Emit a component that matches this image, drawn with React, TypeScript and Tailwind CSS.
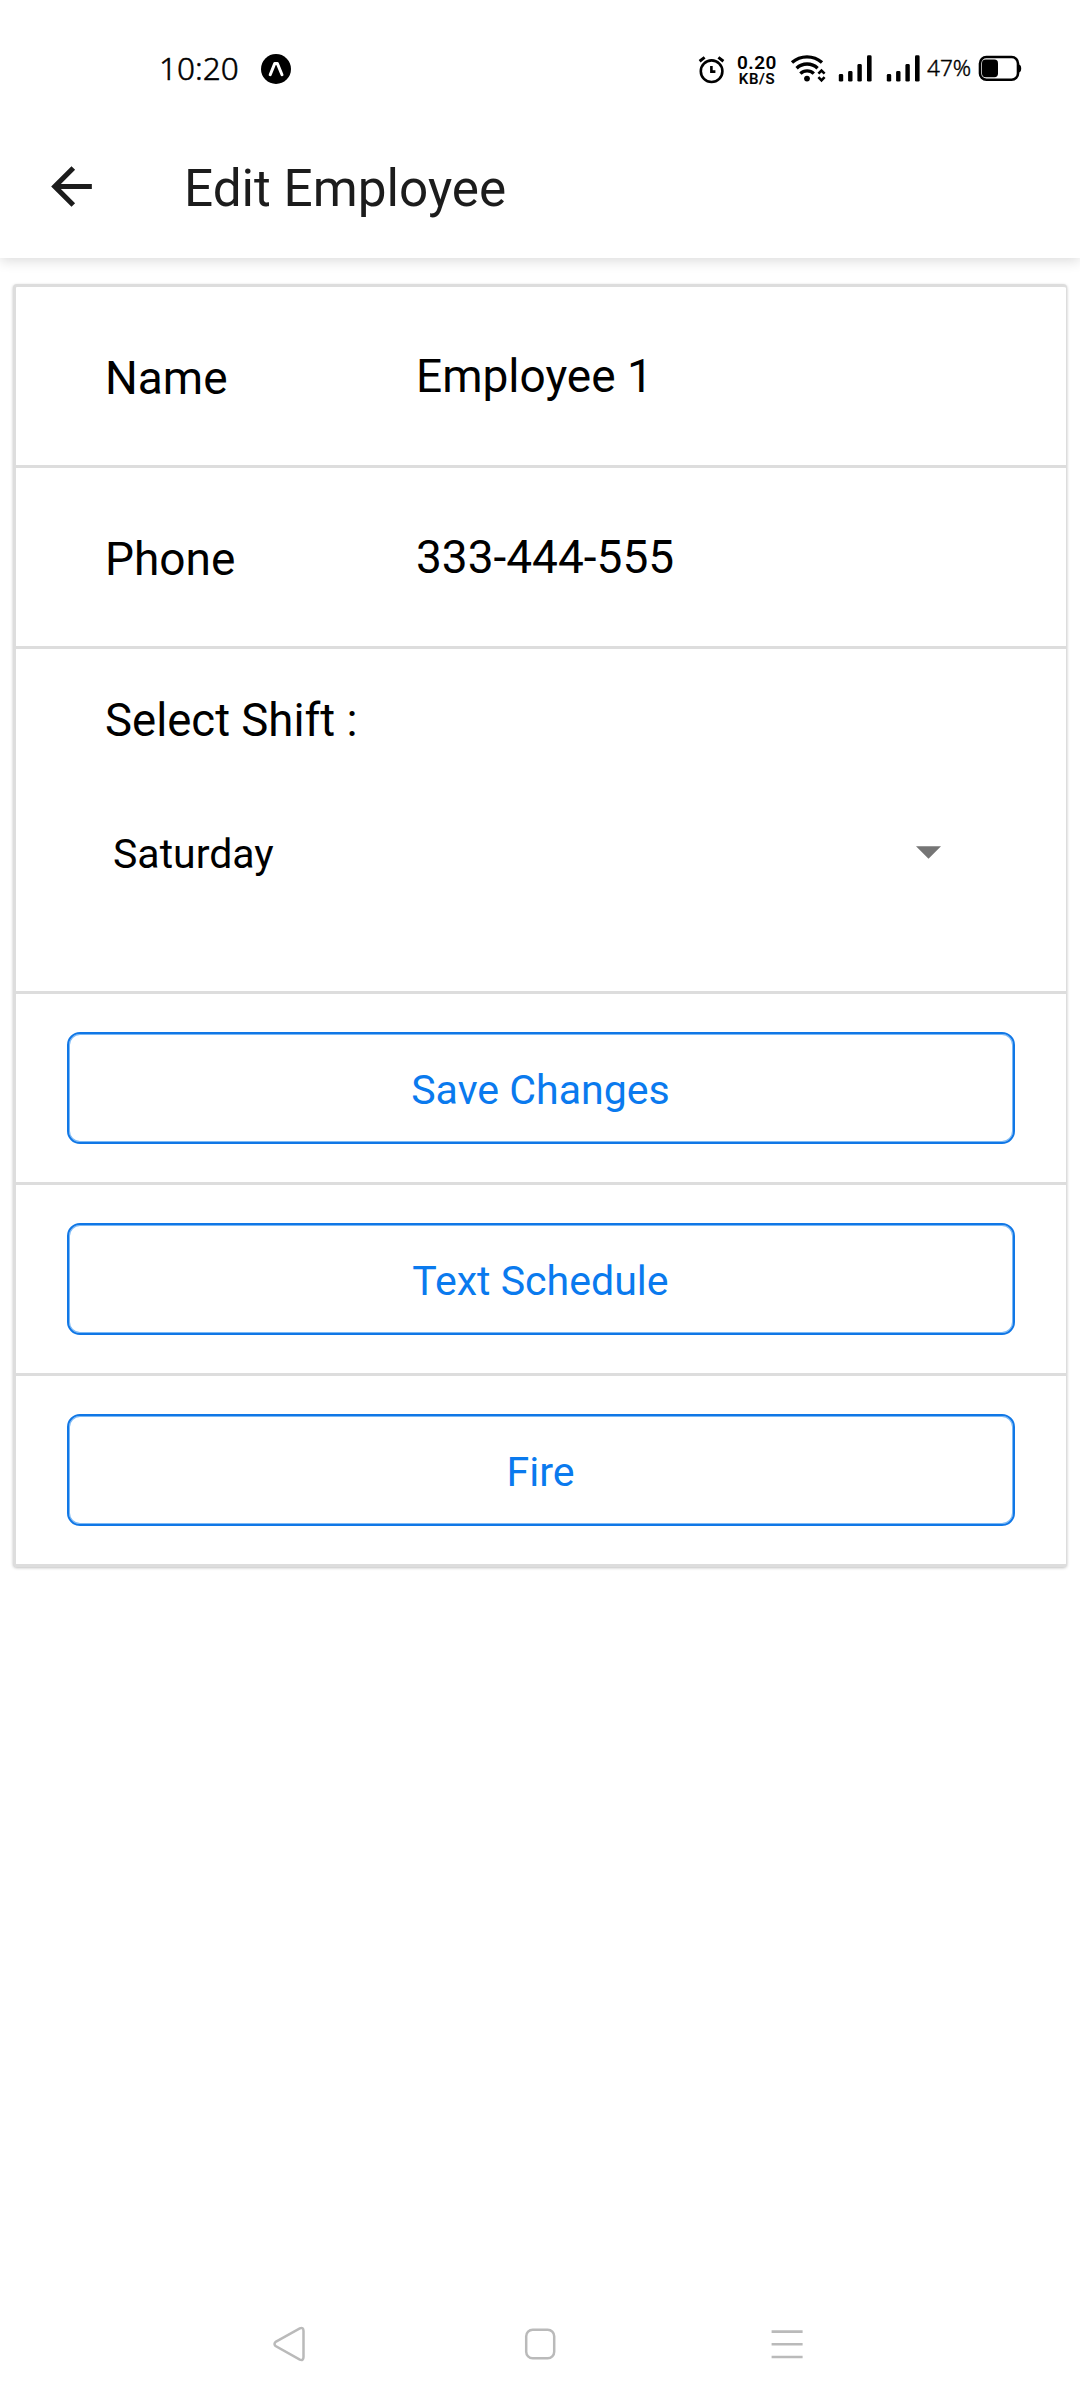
import type { ReactNode } from "react";

function StatusBar() {
  return (
    <div className="flex h-[118px] items-start pt-[49px] text-black">
      <span className="ml-[159px] w-[102px] font-['Noto_Sans',sans-serif] text-[31.5px] font-light leading-[38px] [-webkit-text-stroke:0.5px_black]">10:20</span>
      <svg className="h-[40px] w-[30px]" viewBox="261 49 30 40">
        <circle cx="276" cy="69" r="15" />
        <path d="M270.2 74.7 L274.7 63.6 H277.4 L282 74.7" fill="none" stroke="#fff" strokeWidth="3" strokeLinecap="round" strokeLinejoin="round" />
      </svg>
      <svg className="ml-[405px] h-[40px] w-[32px]" viewBox="696 49 32 40" fill="none" stroke="#000">
        <circle cx="711.6" cy="71.2" r="10.8" strokeWidth="2.6" />
        <path d="M699.6 61.2 L704.6 57.4 M718.4 57.4 L723.4 61.2" strokeWidth="3" />
        <path d="M711.4 66 V71.6 H715.4" strokeWidth="2.6" />
      </svg>
      <div className="ml-2 flex h-[40px] w-[42px] flex-col items-center pt-1 font-[Roboto,sans-serif]">
        <span className="text-[19px] font-semibold leading-[19px] tracking-[0.5px]">0.20</span>
        <span className="text-[15px] font-medium leading-[14px] tracking-[0.6px] [-webkit-text-stroke:0.2px_black]">KB/S</span>
      </div>
      <svg className="ml-[10px] h-[40px] w-[40px]" viewBox="788 49 40 40" fill="none" stroke="#000">
        <path d="M792 62.6 A22.5 22.5 0 0 1 822 62.6" strokeWidth="3.4" />
        <path d="M796.6 68.2 A15.4 15.4 0 0 1 817.6 68.2" strokeWidth="3.4" />
        <path d="M800.4 73.6 A9.6 9.6 0 0 1 813.8 73.6" strokeWidth="3.4" />
        <circle cx="807" cy="78.6" r="2.9" fill="#000" stroke="none" />
        <path d="M818.4 73.6 L821.5 70.5 L824.6 73.6 M818.4 77.2 L821.5 80.3 L824.6 77.2" strokeWidth="2.6" />
      </svg>
      <svg className="ml-2 h-[40px] w-[88px]" viewBox="836 49 88 40">
        {[0, 48].map((dx) => (
          <g key={dx} transform={`translate(${dx} 0)`}>
            <rect x="838.8" y="74" width="4.4" height="7.6" rx="1.4" />
            <rect x="848.1" y="71" width="4.4" height="10.6" rx="1.4" />
            <rect x="857.4" y="64" width="4.4" height="17.6" rx="1.4" />
            <rect x="867" y="55.3" width="4.6" height="26.3" rx="1.4" />
          </g>
        ))}
      </svg>
      <span className="ml-[3px] w-[49px] font-['Noto_Sans',sans-serif] text-[22.6px] font-light leading-[38px] [-webkit-text-stroke:0.4px_black]">47%</span>
      <svg className="h-[40px] w-[48px]" viewBox="976 49 48 40">
        <rect x="980" y="57" width="38" height="22.8" rx="6.4" fill="none" stroke="#000" strokeWidth="2.6" />
        <rect x="982" y="59.6" width="16" height="17.6" rx="3.6" />
        <path d="M1019 64.4 q2.2 0.4 2.2 4 q0 3.6 -2.2 4z" />
      </svg>
    </div>
  );
}

function Header() {
  return (
    <header className="flex h-[140px] items-center bg-white pl-[41px]">
      <svg className="-mt-[3px] h-[61px] w-[61px]" viewBox="0 0 24 24" fill="#1c1c1c">
        <path d="M20 11H7.83l5.59-5.59L12 4l-8 8 8 8 1.41-1.41L7.83 13H20v-2z" />
      </svg>
      <h1 className="ml-[82px] pt-[2px] text-[51.3px] leading-[60px] text-[#1c1c1c]">Edit Employee</h1>
    </header>
  );
}

function Field({ label, value }: { label: string; value: string }) {
  return (
    <div className="flex h-[181px] items-center border-b-[3px] border-[#dddddd] pl-[89px] text-[46px] leading-[54px]">
      <span className="w-[311px] pt-1">{label}</span>
      <span>{value}</span>
    </div>
  );
}

function ActionRow({ children }: { children: ReactNode }) {
  return (
    <div className="h-[191px] border-b-[3px] border-[#dddddd] px-[51px] pt-[38px]">
      <button className="flex h-[112px] w-full items-center justify-center rounded-[13px] border-2 border-[#1077e6] pt-1 pr-px text-[41.1px] leading-[48px] text-[#0a7aee] shadow-[inset_0_0_0_1px_#7ab8f5]">
        {children}
      </button>
    </div>
  );
}

export default function App() {
  return (
    <div className="flex h-[2400px] w-[1080px] flex-col bg-white font-[Roboto,sans-serif] text-black">
      <div className="bg-white shadow-[0_3px_12px_rgba(0,0,0,0.14)]">
        <StatusBar />
        <Header />
      </div>

      <main className="mt-[26px] mr-[13px] ml-[13px] rounded-[4px] border-t-[3px] border-r border-l-[3px] border-[#dddddd] bg-white shadow-[0_1px_3px_rgba(0,0,0,0.25)]">
        <Field label="Name" value="Employee 1" />
        <Field label="Phone" value="333-444-555" />
        <div className="h-[345px] border-b-[3px] border-[#dddddd] pt-[45px] pl-[89px]">
          <p className="text-[45.5px] leading-[54px]">Select Shift :</p>
          <div className="mt-[82px] flex h-[48px] items-center justify-between pr-[125px] pl-[8px]">
            <span className="text-[41px] leading-[48px]">Saturday</span>
            <svg className="-mt-[3px] h-[13px] w-[25px]" viewBox="0 0 25 13" fill="#757575">
              <path d="M0 0.3H25L12.5 12.8Z" />
            </svg>
          </div>
        </div>
        <ActionRow>Save Changes</ActionRow>
        <ActionRow>Text Schedule</ActionRow>
        <ActionRow>Fire</ActionRow>
      </main>

      <nav className="mt-auto flex h-[112px] items-center pl-[272px]">
        <svg className="h-[36px] w-[36px]" viewBox="272 2326 36 36" fill="none" stroke="#bababa" strokeWidth="2.5">
          <path d="M275.6 2341.9 L299.8 2328.4 Q303.5 2327 303.5 2331 V2357 Q303.5 2361 299.8 2359.6 L275.6 2346.1 Q273.4 2344 275.6 2341.9Z" />
        </svg>
        <svg className="ml-[214px] h-[36px] w-[36px]" viewBox="522 2326 36 36" fill="none" stroke="#bababa" strokeWidth="2.5">
          <rect x="526.2" y="2329.8" width="28" height="28.4" rx="6.5" />
        </svg>
        <svg className="ml-[211px] h-[36px] w-[36px]" viewBox="769 2326 36 36" fill="none" stroke="#bababa" strokeWidth="2.6">
          <path d="M771.6 2331.6H802.6M771.6 2344.3H802.6M771.6 2357H802.6" />
        </svg>
      </nav>
    </div>
  );
}
